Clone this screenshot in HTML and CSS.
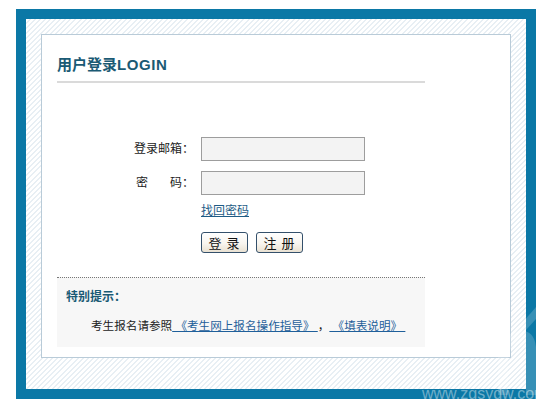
FILE: index.html
```html
<!DOCTYPE html>
<html lang="zh-CN">
<head>
<meta charset="utf-8">
<title>用户登录</title>
<link rel="stylesheet" href="styles.css">
</head>
<body>
<div class="frame">
  <div class="panel">
    <div class="content">
      <h2 class="title">用户登录<span class="latin">LOGIN</span></h2>
      <form class="login">
        <div class="row">
          <label class="lbl">登录邮箱：</label>
          <input class="field" type="text">
        </div>
        <div class="row row-pwd">
          <label class="lbl">密<span class="sp"></span>码：</label>
          <input class="field" type="password">
        </div>
        <div class="row row-link">
          <span class="lbl"></span>
          <a class="forgot" href="#">找回密码</a>
        </div>
        <div class="row row-btn">
          <span class="lbl"></span>
          <button class="btn" type="button">登 录</button>
          <button class="btn" type="button">注 册</button>
        </div>
      </form>
      <div class="tips">
        <div class="tips-title">特别提示：</div>
        <p class="tips-text">考生报名请参照<a class="doc" href="#">&nbsp;《考生网上报名操作指导》&nbsp;</a>，<a class="doc" href="#"> 《填表说明》&nbsp;</a></p>
      </div>
    </div>
  </div>
  <svg class="logo-mark" width="40" height="100" viewBox="0 0 40 100">
    <path d="M2 100 L2 66 Q2 40 22 36 Q38 34 40 52 L40 100 L30 100 L30 56 Q28 47 21 49 Q12 52 12 68 L12 100 Z" fill="#ffffff" fill-opacity="0.18"/>
    <path d="M14 42 L40 12 L40 24 L20 46 Z" fill="#ffffff" fill-opacity="0.18"/>
  </svg>
  <div class="watermark">www.zgsydw.com</div>
</div>
</body>
</html>
```
FILE: styles.css
```css
html, body {
  margin: 0;
  padding: 0;
  background: #fff;
  overflow: hidden;
}
body {
  font-family: "Liberation Sans", "Noto Sans CJK SC", sans-serif;
  font-size: 12px;
  color: #222;
}
.frame {
  position: relative;
  box-sizing: border-box;
  width: 520px;
  margin: 9px 0 0 16px;
  border: 10px solid #0b78a6;
  padding: 15px 15px 31px;
  background: repeating-linear-gradient(135deg, #ffffff 0 2.2px, #e8eff4 2.2px 3.6px);
}
.panel {
  position: relative;
  background: #fff;
  border: 1px solid #b9cbd8;
  padding: 20px 15px 10px;
}
.content {
  width: 368px;
}
.title {
  margin: 0;
  font-size: 15px;
  line-height: 20px;
  font-weight: bold;
  color: #1a5a74;
  padding-bottom: 6px;
  border-bottom: 2px solid #dadada;
}
.latin {
  letter-spacing: 0.6px;
}
.login {
  margin-top: 54px;
}
.row {
  display: flex;
  align-items: center;
}
.lbl {
  width: 137px;
  flex: none;
  margin-right: 7px;
  text-align: right;
  font-size: 12px;
  line-height: 16px;
  color: #222;
}
.sp {
  display: inline-block;
  width: 22px;
}
.field {
  box-sizing: border-box;
  width: 164px;
  height: 24px;
  margin: 0;
  border: 1px solid #9d9d9d;
  background: #f3f3f3;
  padding: 0 3px;
}
.row-pwd {
  margin-top: 10px;
}
.row-link {
  margin-top: 9px;
  line-height: 14px;
}
.forgot {
  font-size: 12px;
  color: #1e5c86;
  text-decoration: underline;
}
.row-btn {
  margin-top: 14px;
}
.btn {
  box-sizing: border-box;
  width: 47px;
  height: 21px;
  margin: 0 8px 0 0;
  padding: 0;
  font-family: "Noto Sans CJK SC", sans-serif;
  font-size: 13px;
  line-height: 19px;
  letter-spacing: 1px;
  color: #111;
  border: 1px solid #34506b;
  border-radius: 3px;
  background: linear-gradient(#ffffff 0%, #f8f5ef 55%, #e9e1d2 100%);
}
.tips {
  margin-top: 24px;
  border-top: 1px dotted #777;
  background: #f7f7f7;
  padding: 11px 9px 13px;
}
.tips-title {
  font-size: 12px;
  line-height: 16px;
  font-weight: bold;
  color: #1a5a74;
}
.tips-text {
  margin: 13px 0 0;
  padding-left: 25px;
  font-size: 11.6px;
  line-height: 16px;
  color: #222;
  white-space: nowrap;
}
.doc {
  color: #1f5f9a;
  text-decoration: underline;
}
.logo-mark {
  position: absolute;
  right: -10px;
  bottom: -6px;
  pointer-events: none;
}
.watermark {
  position: absolute;
  left: 396px;
  top: 367px;
  font-family: "Liberation Sans", sans-serif;
  font-size: 16px;
  line-height: 16px;
  color: rgba(255, 255, 255, 0.42);
  white-space: nowrap;
}
```
